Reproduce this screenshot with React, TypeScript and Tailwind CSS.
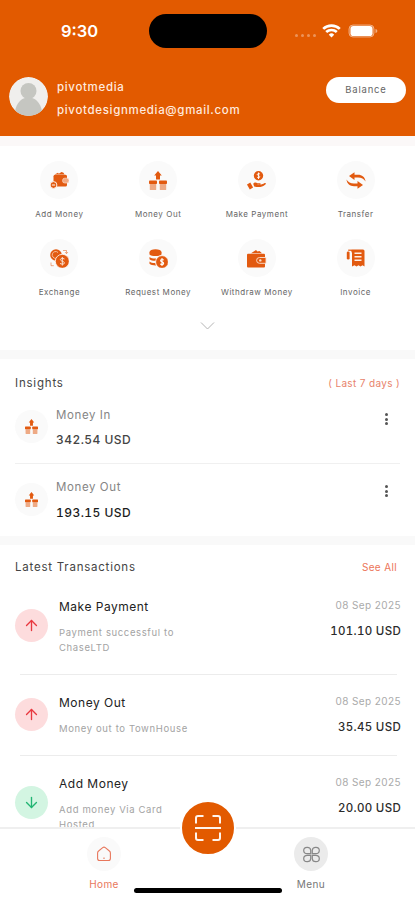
import type { ReactNode } from 'react'
import { ArrowDown, ArrowUp } from 'lucide-react'

const ORANGE = '#e25a10'

const actions = [
  { label: 'Add Money', icon: <AddMoneyIcon /> },
  { label: 'Money Out', icon: <MoneyOutIcon className="h-[19px] w-[18px]" /> },
  { label: 'Make Payment', icon: <PaymentIcon /> },
  { label: 'Transfer', icon: <TransferIcon /> },
  { label: 'Exchange', icon: <ExchangeIcon /> },
  { label: 'Request Money', icon: <RequestIcon /> },
  { label: 'Withdraw Money', icon: <WalletIcon /> },
  { label: 'Invoice', icon: <InvoiceIcon /> },
]

const transactions = [
  { title: 'Make Payment', note: 'Payment successful to ChaseLTD', date: '08 Sep 2025', amount: '101.10 USD', out: true },
  { title: 'Money Out', note: 'Money out to TownHouse', date: '08 Sep 2025', amount: '35.45 USD', out: true },
  { title: 'Add Money', note: 'Add money Via Card Hosted', date: '08 Sep 2025', amount: '20.00 USD', out: false },
]

export default function App() {
  return (
    <div className="relative h-[900px] w-[415px] overflow-hidden bg-white font-['Inter',sans-serif] text-[#444]">
      <Header />
      <div className="h-[10px] bg-[#fbf8f8]" />

      {/* Quick actions */}
      <section className="h-[204px] px-[10px] pt-[15px]">
        <div className="grid grid-cols-4">
          {actions.map((a) => (
            <div key={a.label} className="flex h-[78px] flex-col items-center">
              <span className="flex h-[38px] w-[38px] items-center justify-center rounded-full bg-[#fafafa]">
                {a.icon}
              </span>
              <span className="mt-[9px] whitespace-nowrap text-[8px] leading-[12px] tracking-[0.55px] text-[#666]">
                {a.label}
              </span>
            </div>
          ))}
        </div>
        <svg className="mx-auto mt-[4px] h-[10px] w-[15px]" viewBox="0 0 15 10" fill="none" stroke="#b5b5b5">
          <path d="M1 1.5 7.5 8 14 1.5" />
        </svg>
      </section>
      <div className="h-[9px] bg-[#f9f9f9]" />

      {/* Insights */}
      <section className="h-[177px] px-[15px] pt-[15px]">
        <div className="flex h-[18px] items-center justify-between">
          <h2 className="mt-px text-[11.5px] tracking-[0.8px]">Insights</h2>
          <span className="text-[10px] tracking-[0.35px] text-[#e8836b]">( Last 7 days )</span>
        </div>
        <InsightRow label="Money In" value="342.54 USD" />
        <div className="h-px bg-[#f0f0f0]" />
        <InsightRow label="Money Out" value="193.15 USD" strong />
      </section>
      <div className="h-[9px] bg-[#f9f9f9]" />

      {/* Transactions */}
      <section className="px-[14px] pt-[13px]">
        <div className="flex h-[18px] items-center justify-between pl-px pr-[4px]">
          <h2 className="mt-px text-[11.5px] tracking-[0.77px]">Latest Transactions</h2>
          <span className="text-[10px] tracking-[0.35px] text-[#ec7458]">See All</span>
        </div>
        <div className="mt-[22px]">
          {transactions.map((t, i) => (
            <div key={t.title}>
              {i > 0 && <div className="mb-[19px] ml-[6px] mr-[4px] h-px bg-[#ececec]" />}
              <TransactionRow {...t} />
            </div>
          ))}
        </div>
      </section>

      <BottomNav />
    </div>
  )
}

function Header() {
  return (
    <header className="h-[136px] bg-[#e25a00] text-white">
      <div className="flex h-[62px] items-center">
        <span className="ml-[61px] w-[88px] text-[16.5px] font-semibold leading-none">9:30</span>
        <span className="h-[34px] w-[118px] rounded-full bg-black" />
        <span className="ml-[28px] mt-[9px] flex gap-[3px]">
          {[0, 1, 2, 3].map((n) => (
            <i key={n} className="h-[3px] w-[3px] rounded-full bg-white/35" />
          ))}
        </span>
        <svg className="ml-[6px] h-[14px] w-[19px]" viewBox="0 0 19 14" fill="none" stroke="white" strokeWidth="2.7">
          <path d="M1.2 4.9a12 12 0 0 1 16.6 0" />
          <path d="M4.2 8.1a7.7 7.7 0 0 1 10.6 0" />
          <path d="m6.8 10.7 2.7 2.8 2.7-2.8a3.8 3.8 0 0 0-5.4 0Z" fill="white" stroke="none" />
        </svg>
        <svg className="ml-[7px] h-[14px] w-[30px]" viewBox="0 0 30 14">
          <rect x="1" y="1" width="25" height="12" rx="4" fill="white" fillOpacity=".15" stroke="white" strokeOpacity=".45" />
          <rect x="2.5" y="2" width="22" height="10" rx="2.8" fill="white" />
          <path d="M27.5 5v4c1.2-.4 1.8-1.1 1.8-2s-.6-1.6-1.8-2Z" fill="white" fillOpacity=".5" />
        </svg>
      </div>

      <div className="flex items-start px-[9px] pt-[15px]">
        <svg className="h-[39px] w-[39px] rounded-full" viewBox="0 0 39 39">
          <circle cx="19.5" cy="19.5" r="19.5" fill="#f0efed" />
          <circle cx="19.5" cy="14" r="8" fill="#c5c6c1" />
          <path d="M6 34c1.5-8 6-12 10-13h7c4 1 8.5 5 10 13a19.5 19.5 0 0 1-27 0Z" fill="#c5c6c1" />
        </svg>
        <div className="ml-[9px] flex-1 text-[11.5px] font-medium leading-[22px] tracking-[0.67px] text-[#ffe9df]">
          <p className="-mt-px">pivotmedia</p>
          <p className="mt-px">pivotdesignmedia@gmail.com</p>
        </div>
        <button className="h-[26px] w-[80px] rounded-full bg-white text-[9.5px] tracking-[0.8px] text-[#666]">
          Balance
        </button>
      </div>
    </header>
  )
}

function InsightRow({ label, value, strong = false }: { label: string; value: string; strong?: boolean }) {
  return (
    <div className="flex h-[71px] items-start">
      <span
        className={`flex h-[33px] w-[33px] items-center justify-center rounded-full bg-[#fafafa] ${
          strong ? 'mt-[19px]' : 'mt-[18px]'
        }`}
      >
        <MoneyOutIcon className="h-[15px] w-[13px]" />
      </span>
      <div className="ml-[8px] mt-[14px] flex-1">
        <p className="text-[11.5px] leading-[18px] tracking-[0.6px] text-[#858585]">{label}</p>
        <p
          className={`text-[12px] font-medium leading-[18px] tracking-[0.45px] tabular-nums ${
            strong ? 'mt-[8px] text-[#1c1c1c]' : 'mt-[7px] text-[#444]'
          }`}
        >
          {value}
        </p>
      </div>
      <span className="mr-[12px] mt-[21px] flex flex-col gap-[1.5px]">
        <i className="h-[3px] w-[3px] rounded-full bg-[#555]" />
        <i className="h-[3px] w-[3px] rounded-full bg-[#555]" />
        <i className="h-[3px] w-[3px] rounded-full bg-[#555]" />
      </span>
    </div>
  )
}

type Transaction = (typeof transactions)[number]

function TransactionRow({ title, note, date, amount, out }: Transaction) {
  const tall = note.length > 22
  return (
    <div className={`flex items-start ${tall ? 'h-[76px]' : 'h-[61px]'}`}>
      <span
        className={`ml-px flex h-[33px] w-[33px] shrink-0 items-center justify-center rounded-full ${
          tall ? 'mt-[11px]' : 'mt-[4px]'
        } ${out ? 'bg-[#fddcdd] text-[#e8383f]' : 'bg-[#d3f5e2] text-[#22b573]'}`}
      >
        {out ? <ArrowUp size={17} strokeWidth={1.9} /> : <ArrowDown size={17} strokeWidth={1.9} />}
      </span>
      <div className="ml-[11px] flex-1">
        <p className="text-[12px] leading-[18px] tracking-[0.5px] text-[#222]">{title}</p>
        <p className="mt-[9px] w-[140px] text-[9.5px] leading-[15px] tracking-[0.63px] text-[#a3a3a3]">{note}</p>
      </div>
      <div className="text-right">
        <p className="-mt-px text-[10px] leading-[16px] tracking-[0.4px] text-[#aaa]">{date}</p>
        <p className="mt-[9px] text-[11.5px] font-medium leading-[18px] tracking-[0.3px] tabular-nums text-[#2b2b2b]">
          {amount}
        </p>
      </div>
    </div>
  )
}

function BottomNav() {
  return (
    <nav className="absolute inset-x-0 bottom-0 h-[73px] border-t-2 border-[#efefef] bg-white">
      <div className="flex justify-between px-[74px] pt-[8px]">
        <NavItem label="Home" active>
          <svg className="h-4 w-4" viewBox="0 0 16 16" fill="none" stroke="#e8775c" strokeWidth="1.1">
            <path d="M1.6 7c0-.9.3-1.5 1-2L6.7 1.6c.8-.6 1.8-.6 2.6 0L13.4 5c.7.5 1 1.1 1 2v5.5c0 1.2-.8 2-2 2H3.6c-1.2 0-2-.8-2-2Z" />
            <path d="M8 11.5v1.6" />
          </svg>
        </NavItem>
        <NavItem label="Menu">
          <svg className="h-[17px] w-[17px]" viewBox="0 0 17 17" fill="none" stroke="#888" strokeWidth="1.2">
            <path d="M7.7 7.7H4.2a3.5 3.2 0 1 1 3.5-3.4ZM9.3 7.7h3.5a3.5 3.2 0 1 0-3.5-3.4ZM7.7 9.3H4.2a3.5 3.2 0 1 0 3.5 3.4ZM9.3 9.3h3.5a3.5 3.2 0 1 1-3.5 3.4Z" />
          </svg>
        </NavItem>
      </div>
      <button className="absolute -top-[29px] left-[180px] flex h-[56px] w-[56px] items-center justify-center rounded-full border-2 border-white bg-[#e25a00]">
        <svg className="h-[30px] w-[30px]" viewBox="0 0 30 30" fill="none" stroke="#fff4ec" strokeWidth="2">
          <path d="M3 10.5V5q0-2 2-2h5.5M19.5 3H25q2 0 2 2v5.5M27 19.5V25q0 2-2 2h-5.5M10.5 27H5q-2 0-2-2v-5.5M2 15h26" />
        </svg>
      </button>
      <div className="absolute bottom-[7px] left-[134px] h-[5px] w-[148px] rounded-full bg-black" />
    </nav>
  )
}

function NavItem({ label, active = false, children }: { label: string; active?: boolean; children: ReactNode }) {
  return (
    <div className="flex w-[60px] flex-col items-center">
      <span
        className={`flex h-[34px] w-[34px] items-center justify-center rounded-full ${
          active ? 'bg-[#fafafa]' : 'bg-[#ebebeb]'
        }`}
      >
        {children}
      </span>
      <span
        className={`mt-[5px] text-[10px] leading-[16px] tracking-[0.4px] ${active ? 'text-[#e8775c]' : 'text-[#777]'}`}
      >
        {label}
      </span>
    </div>
  )
}

/* Icons */

function MoneyOutIcon({ className }: { className: string }) {
  return (
    <svg className={className} viewBox="0 0 18 19" preserveAspectRatio="none" fill={ORANGE}>
      <path d="M9 0 12.8 4.5H11V8.500H7V4.5H5.2Z" />
      <rect x="0" y="9.5" width="8" height="3.5" rx=".8" />
      <rect x="10" y="9.5" width="8" height="3.5" rx=".8" />
      <g fillOpacity=".5">
        <rect x=".8" y="13" width="6.4" height="6" rx=".6" />
        <rect x="10.8" y="13" width="6.4" height="6" rx=".6" />
      </g>
    </svg>
  )
}

function AddMoneyIcon() {
  return (
    <svg className="h-[18px] w-[19px]" viewBox="0 0 19 18" fill={ORANGE}>
      <path d="M4.5 3.5 8 1.8l.8 1L11.5 1l2 .8 1 1.7Z" />
      <rect x="3.5" y="3.8" width="13.5" height="11.7" rx="1.5" />
      <rect x="12.5" y="7.2" width="6.5" height="4.8" rx="2.3" fill="#f3a880" stroke="#fbd9c5" strokeWidth=".7" />
      <circle cx="3.5" cy="14" r="3.4" stroke="white" strokeWidth=".9" />
      <path d="M1.9 14h3.2" stroke="white" />
    </svg>
  )
}

function PaymentIcon() {
  return (
    <svg className="h-[19px] w-[19px]" viewBox="0 0 19 19" fill={ORANGE}>
      <circle cx="11.5" cy="4.7" r="4.7" />
      <path d="M13 3c-2.5-1.2-3.8.9-1.5 1.6 2.4.8 1.2 3-1.3 1.7M11.5 1.500V8" fill="none" stroke="white" strokeWidth=".9" />
      <path d="m0 13.5 3.3-1.9 2.8 5-3.3 2Z" />
      <path d="M6.2 12.8c1.2-1.7 3-1.3 4.3-.6h3v1.6H10c2.500 1 6-.8 7.7-1.8 1.3-.5 1.5.7.7 1.4-3.3 2.6-6.4 3.1-11.2 2Z" />
    </svg>
  )
}

function TransferIcon() {
  return (
    <svg className="h-[17px] w-[20px]" viewBox="0 0 20 17" fill={ORANGE}>
      <path d="M3 4 8.5.2v2.600H12c4 0 7 2.2 7.500 6.700-1.600-2.700-4-4.100-7.500-4.100H8.500v2.500Z" />
      <path d="M17 13l-5.500 3.800v-2.600H8c-4 0-7-2.200-7.500-6.700C2.100 10.200 4.500 11.600 8 11.600h3.500V9.100Z" />
    </svg>
  )
}

function ExchangeIcon() {
  return (
    <svg className="h-[19px] w-[19px]" viewBox="0 0 19 19" fill={ORANGE}>
      <circle cx="6" cy="6" r="5.8" />
      <path d="M8 3.500a3.400 3.400 0 1 0-2 5.800" fill="none" stroke="#f6bd9c" />
      <circle cx="12.3" cy="12.3" r="7" stroke="white" strokeWidth=".8" />
      <path d="M14.5 10c-3.5-1.7-6 .9-2.2 2.2 4 1.3 2 4.2-2.3 2.3M12.3 8v8.6" fill="none" stroke="#fbe3d5" />
      <path d="M13 1.5h3.5v2.8M15 3l1.5 1.7L18 3M1 13.5v3.2h2.8" fill="none" stroke={ORANGE} strokeOpacity=".5" />
    </svg>
  )
}

function RequestIcon() {
  return (
    <svg className="h-[19px] w-[19px]" viewBox="0 0 19 19" fill={ORANGE}>
      <ellipse cx="6.5" cy="3.2" rx="6" ry="3" />
      <path d="M.5 4h12v1.5c-2 2-10 2-12 0ZM.5 8c1.5 1.5 4 1.7 6.5 1.6v2.2c-2.5.1-5-.2-6.5-1.5ZM.5 12.5c1.5 1.5 4 1.6 6 1.5l.5 2.4c-3 0-5.5-.4-6.5-1.7Z" />
      <circle cx="13" cy="13" r="6.4" stroke="white" strokeWidth=".8" />
      <path d="M14.8 11c-2.8-1.5-4.5.8-1.8 1.8 3 1 1.5 3.700-1.800 2.200M13 9v8" fill="none" stroke="white" strokeWidth="1.1" />
    </svg>
  )
}

function WalletIcon() {
  return (
    <svg className="h-[19px] w-[20px]" viewBox="0 0 20 19" fill={ORANGE}>
      <path d="M4 4.2 9 1l1.5 1.5L12.5 2l2.5 2.2Z" />
      <rect x="0" y="4.8" width="18" height="13.7" rx="1" />
      <path d="M19 8.500h-6.500a2.900 2.900 0 0 0 0 5.800H19Z" stroke="#fbe3d5" strokeWidth=".9" />
      <circle cx="13.3" cy="11.4" r="1.2" fill="#fbe3d5" />
    </svg>
  )
}

function InvoiceIcon() {
  return (
    <svg className="h-[18px] w-[19px]" viewBox="0 0 19 18" fill={ORANGE}>
      <path d="M5 1.5Q5 .5 6 .5h11q1.5 0 1.5 1.5v15.5l-2-1.2-2 1.2-2-1.2-2 1.2-2-1.2-2.500 1.2V4Z" />
      <path d="M8.5 4.3h7M8.5 7.8h7M8.5 11.3h7" stroke="#fdeee5" strokeWidth="1.5" />
      <rect x=".8" y="2.5" width="2.8" height="8" rx="1.3" />
      <path d="M2.2 1.2h3.300" stroke={ORANGE} strokeWidth="1.2" />
    </svg>
  )
}
